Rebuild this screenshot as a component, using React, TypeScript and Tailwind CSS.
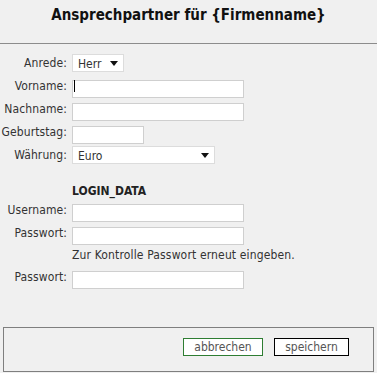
import React from 'react';

const font = "font-['DejaVu_Sans_Condensed','DejaVu_Sans',sans-serif]";

function Row({ label, children }: { label: string; children: React.ReactNode }) {
  return (
    <div className="flex items-center h-[18px]">
      <label className="w-[68px] text-right pr-[1px] text-[12px] text-[#333] tracking-[0.1px]">{label}</label>
      <div className="ml-[4px] flex items-center">{children}</div>
    </div>
  );
}

function TextBox({ w, caret }: { w: string; caret?: boolean }) {
  return (
    <div className={`relative h-[18px] ${w}`}>
      <input className="w-full h-full bg-white border border-[#cfcfcf] outline-none" />
      {caret && <span className="absolute left-[2px] top-[3px] w-[1px] h-[12px] bg-black" />}
    </div>
  );
}

function Select({ w, value }: { w: string; value: string }) {
  return (
    <div className={`h-[18px] ${w} bg-white border border-[#dcdcdc] flex items-center justify-between pl-[5px] pr-[5px]`}>
      <span className="text-[12px] text-[#333] leading-none pt-[2px]">{value}</span>
      <svg width="8" height="5" viewBox="0 0 8 5">
        <path d="M0 0 H8 L4 5 Z" fill="#111" />
      </svg>
    </div>
  );
}

export default function App() {
  return (
    <div className={`w-[377px] h-[373px] bg-[#f0f0f0] ${font} relative`}>
      {/* title */}
      <div className="h-[43px] flex items-center justify-center">
        <h1 className="text-[15px] font-bold text-[#111] -mt-[13px]">Ansprechpartner für {'{Firmenname}'}</h1>
      </div>
      <div className="h-[1px] bg-[#8c8c8c]" />

      {/* form */}
      <div className="pt-[10px] flex flex-col gap-[5px]">
        <Row label="Anrede:"><Select w="w-[52px]" value="Herr" /></Row>
        <Row label="Vorname:"><TextBox w="w-[172px]" caret /></Row>
        <Row label="Nachname:"><TextBox w="w-[172px]" /></Row>
        <Row label="Geburtstag:"><TextBox w="w-[72px]" /></Row>
        <Row label="Währung:"><Select w="w-[143px]" value="Euro" /></Row>
      </div>

      <div className="pt-[17px] pl-[72px] text-[12px] font-bold text-[#222] h-[37px] leading-[20px]">LOGIN_DATA</div>
      <div className="flex flex-col gap-[5px]">
        <Row label="Username:"><TextBox w="w-[172px]" /></Row>
        <Row label="Passwort:"><TextBox w="w-[172px]" /></Row>
      </div>
      <div className="pl-[72px] h-[26px] flex items-center text-[12px] text-[#333] tracking-[0.15px]">Zur Kontrolle Passwort erneut eingeben.</div>
      <Row label="Passwort:"><TextBox w="w-[172px]" /></Row>

      {/* buttons */}
      <div className="mt-[41px] mx-[3px] h-[45px] border border-[#7f7f7f] flex items-start justify-end pt-[10px] pr-[24px] gap-[11px]">
        <button className="w-[80px] h-[18px] bg-white border border-[#2e7d32] text-[12px] text-[#555] leading-none">abbrechen</button>
        <button className="w-[75px] h-[18px] bg-white border border-black text-[12px] text-[#555] leading-none">speichern</button>
      </div>
    </div>
  );
}
